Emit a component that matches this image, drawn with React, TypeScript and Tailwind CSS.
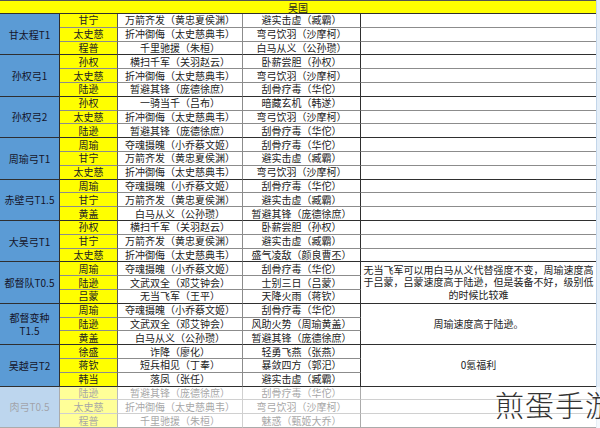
import React from "react";

type Row = [string, string, string];
type Group = { name: React.ReactNode; rows: Row[]; note?: string; faded?: boolean };

const groups: Group[] = [
  {
    name: "甘太程T1",
    rows: [
      ["甘宁", "万箭齐发（黄忠夏侯渊）", "避实击虚（臧霸）"],
      ["太史慈", "折冲御侮（太史慈典韦）", "弯弓饮羽（沙摩柯）"],
      ["程普", "千里驰援（朱桓）", "白马从义（公孙瓒）"],
    ],
  },
  {
    name: "孙权弓1",
    rows: [
      ["孙权", "横扫千军（关羽赵云）", "卧薪尝胆（孙权）"],
      ["太史慈", "折冲御侮（太史慈典韦）", "弯弓饮羽（沙摩柯）"],
      ["陆逊", "暂避其锋（庞德徐庶）", "刮骨疗毒（华佗）"],
    ],
  },
  {
    name: "孙权弓2",
    rows: [
      ["孙权", "一骑当千（吕布）", "暗藏玄机（韩遂）"],
      ["太史慈", "折冲御侮（太史慈典韦）", "弯弓饮羽（沙摩柯）"],
      ["陆逊", "暂避其锋（庞德徐庶）", "刮骨疗毒（华佗）"],
    ],
  },
  {
    name: "周瑜弓T1",
    rows: [
      ["周瑜", "夺魂摄魄（小乔蔡文姬）", "刮骨疗毒（华佗）"],
      ["甘宁", "万箭齐发（黄忠夏侯渊）", "避实击虚（臧霸）"],
      ["太史慈", "折冲御侮（太史慈典韦）", "弯弓饮羽（沙摩柯）"],
    ],
  },
  {
    name: "赤壁弓T1.5",
    rows: [
      ["周瑜", "夺魂摄魄（小乔蔡文姬）", "刮骨疗毒（华佗）"],
      ["甘宁", "万箭齐发（黄忠夏侯渊）", "避实击虚（臧霸）"],
      ["黄盖", "白马从义（公孙瓒）", "暂避其锋（庞德徐庶）"],
    ],
  },
  {
    name: "大吴弓T1",
    rows: [
      ["孙权", "横扫千军（关羽赵云）", "卧薪尝胆（孙权）"],
      ["甘宁", "万箭齐发（黄忠夏侯渊）", "避实击虚（臧霸）"],
      ["太史慈", "折冲御侮（太史慈典韦）", "盛气凌敌（颜良曹丕）"],
    ],
  },
  {
    name: "都督队T0.5",
    rows: [
      ["周瑜", "夺魂摄魄（小乔蔡文姬）", "刮骨疗毒（华佗）"],
      ["陆逊", "文武双全（邓艾钟会）", "士别三日（吕蒙）"],
      ["吕蒙", "无当飞军（王平）", "天降火雨（蒋钦）"],
    ],
    note: "无当飞军可以用白马从义代替强度不变，周瑜速度高于吕蒙，吕蒙速度高于陆逊，但是装备不好，级别低的时候比较难",
  },
  {
    name: (
      <>
        都督变种
        <br />
        T1.5
      </>
    ),
    rows: [
      ["周瑜", "夺魂摄魄（小乔蔡文姬）", "刮骨疗毒（华佗）"],
      ["陆逊", "文武双全（邓艾钟会）", "风助火势（周瑜黄盖）"],
      ["黄盖", "白马从义（公孙瓒）", "暂避其锋（庞德徐庶）"],
    ],
    note: "周瑜速度高于陆逊。",
  },
  {
    name: "吴越弓T2",
    rows: [
      ["徐盛", "诈降（廖化）", "轻勇飞燕（张燕）"],
      ["蒋钦", "短兵相见（丁奉）", "暴敛四方（郭汜）"],
      ["韩当", "落凤（张任）", "避实击虚（臧霸）"],
    ],
    note: "0氪福利",
  },
  {
    name: "肉弓T0.5",
    rows: [
      ["陆逊", "暂避其锋（庞德徐庶）", "刮骨疗毒（华佗）"],
      ["太史慈", "折冲御侮（太史慈典韦）", "弯弓饮羽（沙摩柯）"],
      ["程普", "千里驰援（朱桓）", "魅惑（甄姬大乔）"],
    ],
    faded: true,
  },
];

const rowStart = ["row-start-1", "row-start-2", "row-start-3"];

function GroupBlock({ g }: { g: Group }) {
  return (
    <div
      className={`grid grid-cols-[60px_58px_125px_118px_235px_4px] grid-rows-[13.8px_13.8px_13.8px] ${
        g.faded ? "opacity-40" : ""
      }`}
    >
      <div className="row-span-3 col-start-1 row-start-1 bg-[#5b9bd5] border-r border-b border-[#2f2f2f] flex items-center justify-center text-center text-[10px] leading-[13px] text-[#15152a]">
        <div>{g.name}</div>
      </div>
      {g.rows.map((r, i) => {
        const bb = i === 2 ? "border-b border-b-[#2f2f2f]" : "border-b border-b-[#8c8c8c]";
        const rs = rowStart[i];
        return (
          <React.Fragment key={i}>
            <div
              className={`col-start-2 ${rs} bg-[#ffff00] border-r border-r-[#555] ${bb} flex items-center justify-center text-[10px] leading-[12px] text-[#222]`}
            >
              {r[0]}
            </div>
            <div
              className={`col-start-3 ${rs} bg-white border-r border-r-[#8c8c8c] ${bb} flex items-center justify-center text-[10px] leading-[12px] text-[#222] whitespace-nowrap`}
            >
              {r[1]}
            </div>
            <div
              className={`col-start-4 ${rs} bg-white border-r border-r-[#2f2f2f] ${bb} flex items-center justify-center text-[10px] leading-[12px] text-[#222] whitespace-nowrap`}
            >
              {r[2]}
            </div>
            {!g.note && <div className={`col-start-5 ${rs} bg-white ${bb}`} />}
            <div className={`col-start-6 ${rs} bg-[#e4eef8] border-l border-l-[#c3d6ea]`} />
          </React.Fragment>
        );
      })}
      {g.note && (
        <div className="col-start-5 row-start-1 row-span-3 bg-white border-b border-b-[#2f2f2f] flex items-center justify-center text-center text-[10px] leading-[12.5px] text-[#222] px-[1px]">
          <div>{g.note}</div>
        </div>
      )}
    </div>
  );
}

export default function App() {
  return (
    <div className="relative w-[600px] h-[428px] overflow-hidden bg-white font-['Noto_Sans_CJK_SC','Liberation_Sans',sans-serif]">
      <div className="grid grid-cols-[596px_4px] h-[14px]">
        <div className="bg-[#ffff00] border-t border-t-[#555] border-b border-b-[#2f2f2f] flex items-center justify-center text-[10px] leading-[11px] text-[#222]">
          吴国
        </div>
        <div className="bg-[#e4eef8] border-l border-l-[#c3d6ea]" />
      </div>
      {groups.map((g, i) => (
        <GroupBlock key={i} g={g} />
      ))}
      <div className="absolute left-[495px] top-[390px] text-[29px] leading-none font-light text-[#333] tracking-[1px] whitespace-nowrap">
        煎蛋手游
      </div>
    </div>
  );
}
